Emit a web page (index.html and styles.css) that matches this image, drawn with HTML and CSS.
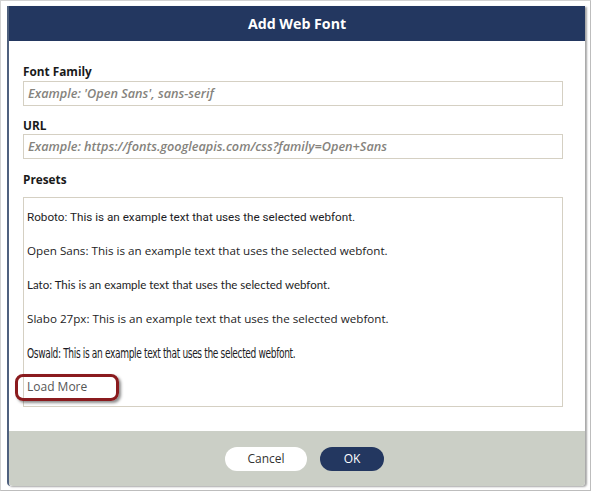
FILE: index.html
```html
<!DOCTYPE html>
<html>
<head>
<meta charset="utf-8">
<link rel="stylesheet" href="styles.css">
</head>
<body>
<div class="frame">
  <div class="modal">
    <div class="modal-header">Add Web Font</div>
    <div class="modal-body">
      <label class="field-label">Font Family</label>
      <div class="input">Example: 'Open Sans', sans-serif</div>
      <label class="field-label gap">URL</label>
      <div class="input">Example: https://fonts.googleapis.com/css?family=Open+Sans</div>
      <label class="field-label gap2">Presets</label>
      <div class="presets">
        <div class="preset f-roboto">Roboto: This is an example text that uses the selected webfont.</div>
        <div class="preset f-open">Open Sans: This is an example text that uses the selected webfont.</div>
        <div class="preset f-lato">Lato: This is an example text that uses the selected webfont.</div>
        <div class="preset f-open">Slabo 27px: This is an example text that uses the selected webfont.</div>
        <div class="preset f-oswald">Oswald: This is an example text that uses the selected webfont.</div>
        <div class="preset load-more"><span class="highlight"></span>Load More</div>
      </div>
    </div>
    <div class="modal-footer">
      <button class="btn btn-cancel">Cancel</button>
      <button class="btn btn-ok">OK</button>
    </div>
  </div>
</div>
</body>
</html>
```
FILE: styles.css
```css
html, body {
  margin: 0;
  padding: 0;
  background: #ffffff;
}

body {
  font-family: "Open Sans", "Liberation Sans", sans-serif;
  color: #1e1e1e;
}

.frame {
  width: 591px;
  height: 491px;
  box-sizing: border-box;
  border: 1px solid #d2d2d2;
  border-right-color: #bdbdbd;
  border-bottom-color: #bdbdbd;
  padding: 5px 0 0 6px;
}

.modal {
  width: 578px;
  height: 480px;
  box-sizing: border-box;
  border-left: 2px solid #4e607e;
  border-radius: 0 0 4px 4px;
  box-shadow: 2px 1px 2px rgba(0, 0, 0, 0.35);
  display: flex;
  flex-direction: column;
  background: #ffffff;
}

.modal-header {
  height: 35px;
  background: #233760;
  color: #ffffff;
  font-weight: 700;
  font-size: 14.2px;
  line-height: 35px;
  text-align: center;
}

.modal-body {
  flex: 1;
  padding: 22px 22px 0 14px;
  display: flex;
  flex-direction: column;
}

.field-label {
  display: block;
  font-size: 11.8px;
  font-weight: 700;
  line-height: 16px;
  color: #1a1a1a;
  margin-bottom: 2px;
}

.field-label.gap {
  margin-top: 11px;
  margin-bottom: 1px;
}

.field-label.gap2 {
  margin-top: 12px;
  margin-bottom: 10px;
}

.input {
  height: 25px;
  box-sizing: border-box;
  border: 1px solid #d5d0c3;
  padding: 0 4px;
  font-size: 12.7px;
  line-height: 23px;
  font-style: italic;
  font-weight: 600;
  color: #85837d;
}

.presets {
  height: 210px;
  box-sizing: border-box;
  border: 1px solid #d5d0c3;
  padding: 2px 3px 0 3px;
}

.preset {
  position: relative;
  line-height: 34px;
  height: 34px;
  font-size: 11.65px;
  color: #1c1c24;
  white-space: nowrap;
}

.f-roboto {
  font-family: Roboto, sans-serif;
  font-size: 11.7px;
}

.f-open {
  font-family: "Open Sans", sans-serif;
}

.f-lato {
  font-family: Lato, sans-serif;
  font-size: 11.5px;
}

.f-oswald {
  font-family: "DejaVu Sans Condensed", "DejaVu Sans", sans-serif;
  font-stretch: condensed;
  font-size: 14px;
  letter-spacing: -0.5px;
  transform: scaleX(0.72);
  transform-origin: left center;
}

.load-more {
  font-family: "Open Sans", sans-serif;
  font-size: 12px;
  color: #555555;
}

.highlight {
  position: absolute;
  left: -12px;
  top: 4px;
  width: 104px;
  height: 27px;
  box-sizing: border-box;
  border: 3px solid #8a1b1e;
  border-radius: 8px;
  box-shadow: 2px 2px 3px rgba(0, 0, 0, 0.45);
}

.modal-footer {
  height: 55px;
  background: #cbcfc6;
  border-radius: 0 0 4px 4px;
  display: flex;
  align-items: center;
  justify-content: center;
  gap: 13px;
  padding-left: 15px;
}

.btn {
  font-family: "Open Sans", sans-serif;
  font-size: 12px;
  height: 24px;
  border: none;
  border-radius: 12px;
  padding: 0;
  cursor: pointer;
}

.btn-cancel {
  width: 82px;
  background: #ffffff;
  color: #333333;
}

.btn-ok {
  width: 64px;
  background: #233760;
  color: #ffffff;
}
```
